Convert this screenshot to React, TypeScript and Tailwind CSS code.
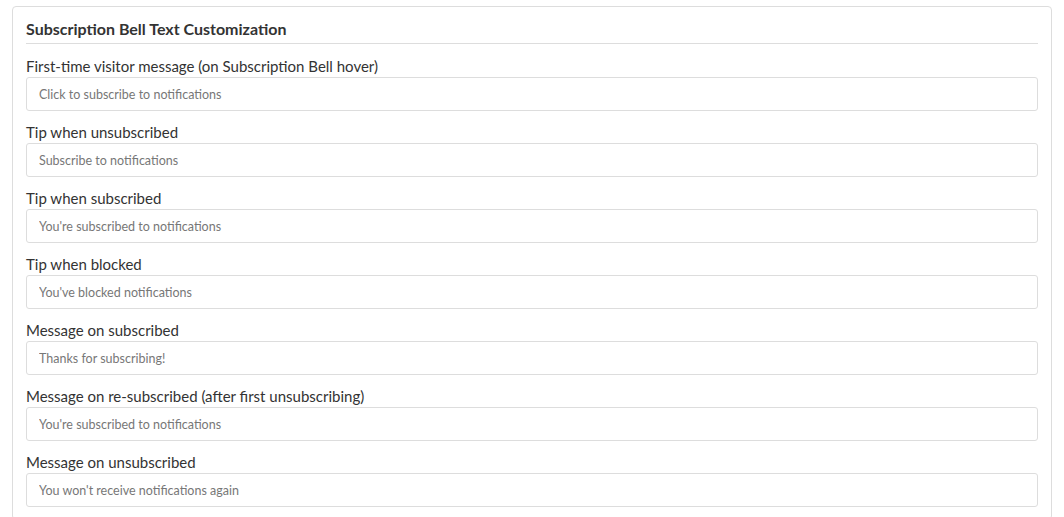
const fields = [
  { label: 'First-time visitor message (on Subscription Bell hover)', placeholder: 'Click to subscribe to notifications' },
  { label: 'Tip when unsubscribed', placeholder: 'Subscribe to notifications' },
  { label: 'Tip when subscribed', placeholder: "You're subscribed to notifications" },
  { label: 'Tip when blocked', placeholder: "You've blocked notifications" },
  { label: 'Message on subscribed', placeholder: 'Thanks for subscribing!' },
  { label: 'Message on re-subscribed (after first unsubscribing)', placeholder: "You're subscribed to notifications" },
  { label: 'Message on unsubscribed', placeholder: "You won't receive notifications again" },
];

export default function App() {
  return (
    <div className="min-h-screen bg-white px-3 pt-1.5 font-['Lato',sans-serif] text-[#333]">
      <div className="rounded border border-[#ddd] bg-white px-[13px] pt-[11px] pb-3">
        <h3 className="border-b border-[#ddd] pb-[3px] text-[16px] leading-[22px] font-bold text-[#333]">
          Subscription Bell Text Customization
        </h3>
        <div className="mt-[11px] flex flex-col gap-[10px]">
          {fields.map((f) => (
            <div key={f.label} className="flex flex-col">
              <label className="text-[15px] leading-[22px] text-[#333]">{f.label}</label>
              <input
                type="text"
                placeholder={f.placeholder}
                className="h-[34px] w-full rounded-[3px] border border-[#ddd] bg-white px-3 text-[12.5px] text-[#555] placeholder:text-[#777] outline-none"
              />
            </div>
          ))}
        </div>
      </div>
    </div>
  );
}
